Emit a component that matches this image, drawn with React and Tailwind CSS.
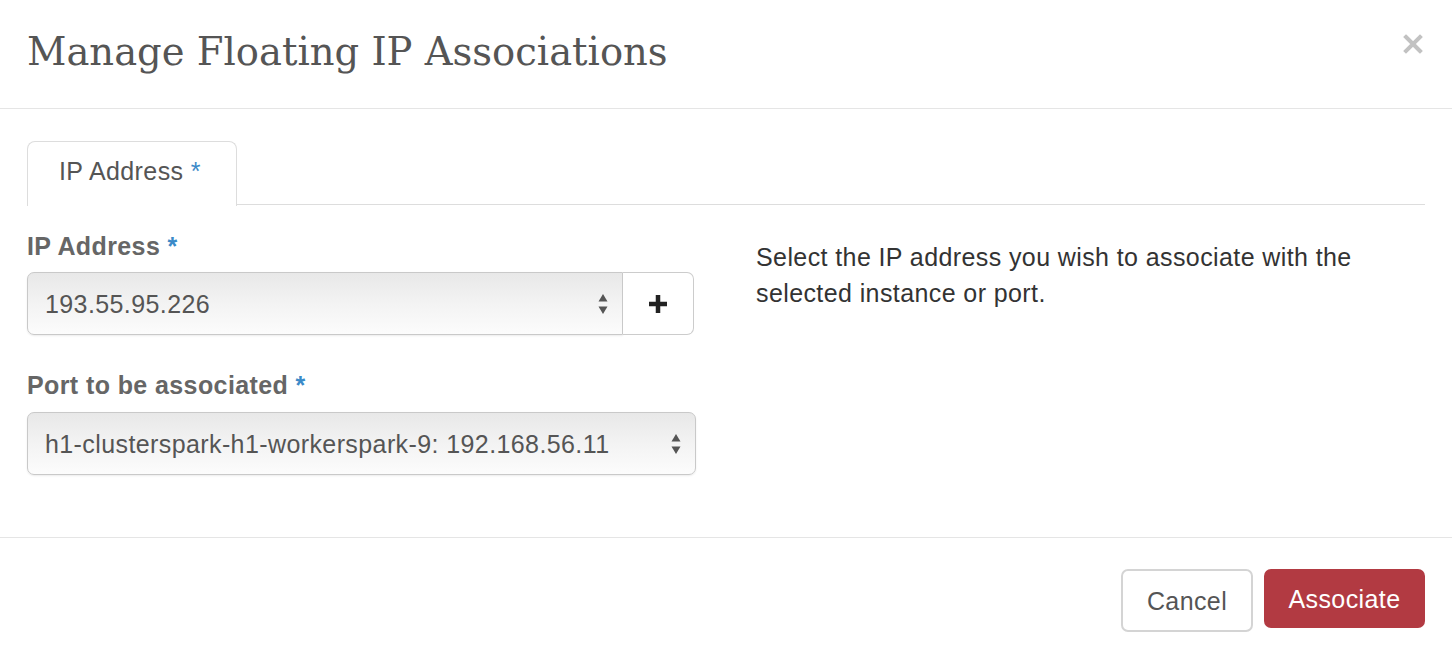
function SelectArrows() {
    return (
        <svg width="12" height="24" viewBox="0 0 12 24" className="shrink-0">
            <path d="M6 2 L10.5 9.5 L1.5 9.5 Z" fill="#555" />
            <path d="M6 22 L10.5 14.5 L1.5 14.5 Z" fill="#555" />
        </svg>
    );
}

function FakeSelect({ value, className }) {
    return (
        <div
            className={
                "h-[63px] flex items-center justify-between pl-[17px] pr-[13px] border border-[#c9c9c9] rounded-[7px] bg-linear-to-b from-[#e8e8e8] via-[#f3f3f3] to-[#fcfcfc] shadow-[0_1px_2px_rgba(0,0,0,0.08)] " +
                className
            }
        >
            <span className="text-[#555] truncate">{value}</span>
            <SelectArrows />
        </div>
    );
}

function App() {
    return (
        <div className="w-[1452px] h-[658px] bg-white font-['Liberation_Sans',Arial,sans-serif] text-[25px] tracking-[0.4px] leading-[34px] text-[#333]">

            {/* header */}
            <div className="h-[109px] border-b border-[#e5e5e5] flex items-start justify-between pl-[27px] pr-[29px]">
                <h4 className="mt-[27px] font-['DejaVu_Serif',serif] font-normal text-[38.5px] leading-[50px] text-[#555] tracking-normal">
                    Manage Floating IP Associations
                </h4>
                <button className="mt-[34px]">
                    <svg width="20" height="20" viewBox="0 0 20 20">
                        <path d="M3 3 L17 17 M17 3 L3 17" stroke="#c2c2c2" strokeWidth="4" strokeLinecap="square" />
                    </svg>
                </button>
            </div>

            {/* body */}
            <div className="h-[428px] px-[27px] pt-[32px]">

                <ul className="flex border-b border-[#ddd] h-[64px]">
                    <li className="w-[210px] h-[65px] border border-[#ddd] border-b-0 rounded-t-[8px] bg-white pl-[31px] pt-[12px] text-[#555]">
                        IP Address <span className="text-[#3b8ac8]">*</span>
                    </li>
                </ul>

                <div className="grid grid-cols-2 gap-[60px] mt-[24px]">
                    <div>
                        <label className="block font-bold text-[#666] mb-[9px]">
                            IP Address <span className="text-[#3b8ac8]">*</span>
                        </label>
                        <div className="flex pr-[2px]">
                            <FakeSelect value="193.55.95.226" className="flex-1 rounded-r-none" />
                            <button className="w-[71px] h-[63px] border border-l-0 border-[#ccc] rounded-r-[7px] bg-white flex items-center justify-center">
                                <svg width="20" height="20" viewBox="0 0 20 20">
                                    <path d="M10 1 V19 M1 10 H19" stroke="#222" strokeWidth="4.5" />
                                </svg>
                            </button>
                        </div>

                        <label className="block font-bold text-[#666] mt-[33px] mb-[10px]">
                            Port to be associated <span className="text-[#3b8ac8]">*</span>
                        </label>
                        <FakeSelect value="h1-clusterspark-h1-workerspark-9: 192.168.56.11" className="" />
                    </div>

                    <div className="pt-[10px]">
                        <p className="leading-[36px] text-[#333] max-w-[630px]">
                            Select the IP address you wish to associate with the selected instance or port.
                        </p>
                    </div>
                </div>
            </div>

            {/* footer */}
            <div className="border-t border-[#e5e5e5] flex justify-end items-start gap-[11px] pt-[31px] pr-[27px]">
                <button className="w-[132px] h-[63px] border-2 border-[#d4d4d4] rounded-[7px] bg-white text-[#555]">
                    Cancel
                </button>
                <button className="w-[161px] h-[59px] rounded-[7px] bg-[#b23a42] text-white">
                    Associate
                </button>
            </div>
        </div>
    );
}

export default App;
